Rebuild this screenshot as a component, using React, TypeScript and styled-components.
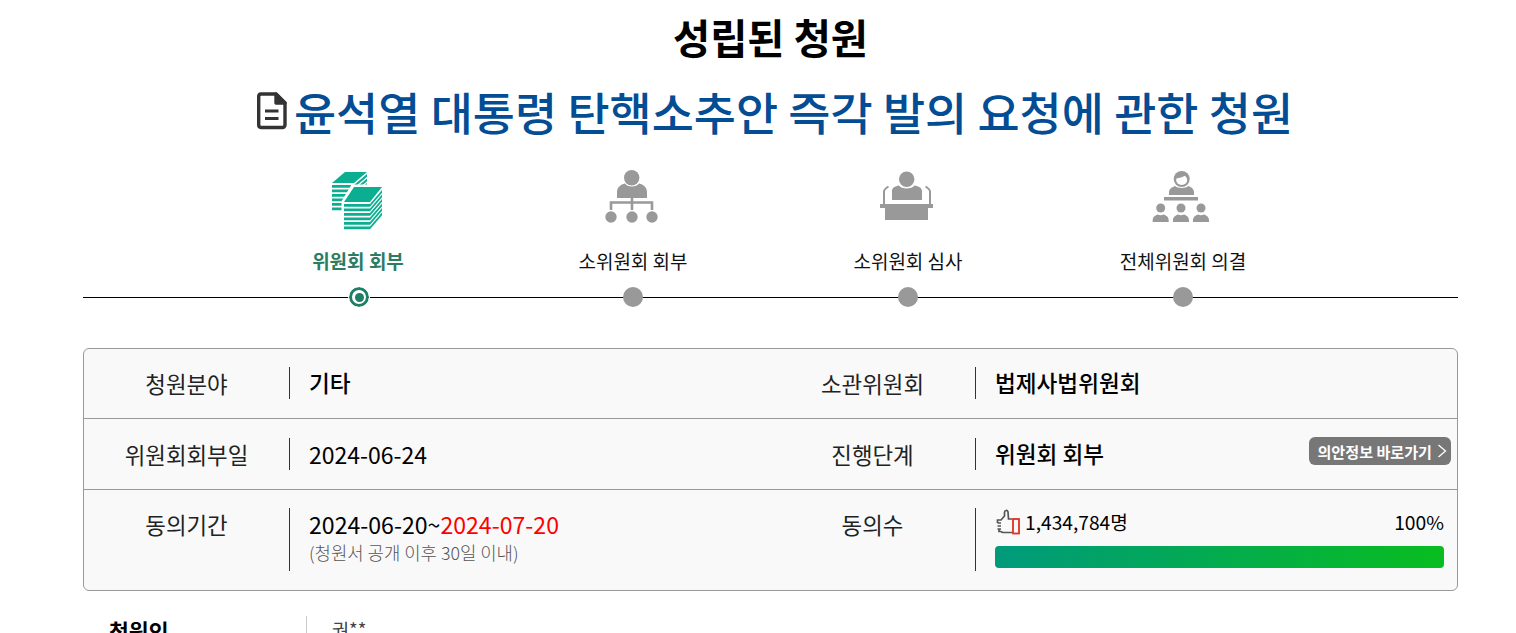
import React from "react";
import styled, { createGlobalStyle } from "styled-components";

const Global = createGlobalStyle`
  html, body { margin: 0; padding: 0; background: #fff; overflow: hidden; height: 633px; }
  body { font-family: "Noto Sans CJK KR", "Noto Sans", sans-serif; color: #000; }
`;
const Page = styled.div`width: 1375px; margin-left: 83px;`;
const Title = styled.h2`margin: 0; height: 74px; font-size: 40.4px; line-height: 74px; font-weight: 700; text-align: center; color: #000;`;
const Subject = styled.h1`
  margin: 0; height: 74px; padding-left: 9px; box-sizing: border-box; display: flex; justify-content: center; align-items: center; gap: 7px;
  font-size: 45.8px; line-height: 74px; font-weight: 500; color: #034d94;
`;
const Steps = styled.ol`
  position: relative; list-style: none; margin: 15px 0 0; padding: 0 137.5px; display: grid; grid-template-columns: repeat(4, 275px);
  &::before { content: ""; position: absolute; left: 0; right: 0; top: 134px; height: 1px; background: #000; }
`;
const Step = styled.li`display: flex; flex-direction: column; align-items: center; height: 147px;`;
const StepIcon = styled.div`width: 70px; height: 70px;`;
const StepLabel = styled.div<{ $active?: boolean }>`
  margin-top: 13px; height: 30px; font-size: 19px; line-height: 30px;
  font-weight: ${p => (p.$active ? 700 : 400)}; color: ${p => (p.$active ? "#2a7d62" : "#111")};
`;
const Dot = styled.span<{ $active?: boolean }>`
  position: relative; margin-top: 11px; width: 20px; height: 20px; border-radius: 50%; box-sizing: border-box;
  background: ${p => (p.$active ? "#fff" : "#999")};
  ${p => p.$active && `
    margin-left: 2px; border: 3px solid #1f7f63; outline: 1px solid #fff;
    &::after { content: ""; position: absolute; left: 2.5px; top: 2.5px; width: 9px; height: 9px; border-radius: 50%; background: #1f7f63; }
  `}
`;
const Card = styled.section`
  box-sizing: border-box; margin-top: 38px; height: 243px; border: 1px solid #999; border-radius: 6px; background: #f9f9f9;
  display: grid; grid-template-rows: 70px 71px 1fr;
`;
const Row = styled.div<{ $last?: boolean; $first?: boolean }>`
  display: grid; grid-template-columns: 686px 1fr; box-sizing: border-box;
  ${p => !p.$last && "border-bottom: 1px solid #999;"}
  ${p => p.$first && "padding-bottom: 1px;"}
`;
const Half = styled.div<{ $top?: boolean }>`
  display: grid; grid-template-columns: 205px 1fr;
  align-items: ${p => (p.$top ? "start" : "center")};
  padding-top: ${p => (p.$top ? "18px" : "0")};
`;
const Label = styled.div`text-align: center; font-size: 22.4px; line-height: 32px; color: #222;`;
const Value = styled.div<{ $digits?: boolean }>`
  box-sizing: border-box; border-left: 1px solid #333; padding: 0 6px 0 19px; min-height: 32px; line-height: 32px;
  font-size: ${p => (p.$digits ? "23px" : "22.6px")}; font-weight: ${p => (p.$digits ? 400 : 500)};
  display: flex; justify-content: space-between; align-items: center; color: #000;
`;
const DateValue = styled.div`box-sizing: border-box; border-left: 1px solid #333; padding-left: 19px; height: 63px;`;
const DateLine = styled.div`font-size: 23.1px; line-height: 33px; font-weight: 400; color: #000;`;
const Deadline = styled.span`color: #f00;`;
const Note = styled.div`font-size: 17.8px; line-height: 22px; color: #555; font-weight: 300;`;
const CountCell = styled.div`box-sizing: border-box; border-left: 1px solid #333; padding: 0 13px 0 19px; height: 63px;`;
const CountRow = styled.div`display: flex; justify-content: space-between; align-items: center; height: 28px; font-size: 19.2px; font-weight: 400;`;
const CountLeft = styled.div`display: flex; align-items: center; gap: 5px; padding-left: 1px;`;
const Percent = styled.span`font-weight: 400; font-size: 19.3px;`;
const Track = styled.div`margin-top: 10px; height: 22px; border-radius: 4px; background: linear-gradient(90deg, #009a7c, #08bd1f);`;
const LinkButton = styled.a`
  display: inline-flex; align-items: center; gap: 5px; height: 28px; margin: -3px 0 3px; padding: 0 4px 0 8px; border-radius: 6px; background: #777; color: #fff;
  font-size: 15.1px; line-height: 28px; font-weight: 700; white-space: nowrap;
`;
const Applicant = styled.div`display: grid; grid-template-columns: 223px 1fr; margin-top: 25px; height: 40px;`;
const ApplicantLabel = styled.div`padding-left: 26px; font-size: 21.6px; line-height: 26px; font-weight: 700; margin-top: 2px;`;
const ApplicantValue = styled.div`border-left: 1px solid #ccc; padding-left: 25px; font-size: 18.6px; line-height: 26px; color: #444;`;

const DocIcon = () => (
  <svg width="30" height="40" viewBox="0 0 30 40" fill="none" stroke="#333" strokeWidth="3.400">
    <path d="M4 3H19L28 12V34a2.500 2.500 0 0 1-2.500 2.500H4A2.500 2.500 0 0 1 1.700 34V5.500A2.500 2.500 0 0 1 4 3Z" strokeLinejoin="round" />
    <path d="M19 3V12H28Z" strokeLinejoin="round" fill="#333" />
    <path d="M8 20H21.500M8 27.500H21.500" strokeWidth="3" />
  </svg>
);

const StackIcon = () => (
  <svg width="70" height="70" viewBox="0 0 70 70">
    <g fill="#0bae90">
      <path d="M9 20L22 9H44L31 20Z" />
      {[0, 1, 2, 3, 4, 5].map(i => (
        <path key={i} d={`M9 ${22 + i * 4.5}H31L44 ${11 + i * 4.5}V${13.8 + i * 4.5}L31 ${24.8 + i * 4.5}H9Z`} />
      ))}
    </g>
    <path d="M21 39L30 24H59V50L47 65H21Z" fill="#fff" stroke="#fff" strokeWidth="5" />
    <g fill="#0bae90">
      <path d="M21 39L31 24H59L47 39Z" />
      {[0, 1, 2, 3, 4, 5].map(i => (
        <path key={i} d={`M21 ${41 + i * 4.5}H47L59 ${27 + i * 4.5}V${29.8 + i * 4.5}L47 ${43.8 + i * 4.5}H21Z`} />
      ))}
    </g>
  </svg>
);
const OrgIcon = () => (
  <svg width="70" height="70" viewBox="0 0 70 70" fill="#999">
    <circle cx="33.700" cy="14.700" r="7.700" />
    <path d="M19 35V29C19 24.500 22.500 21.500 27 20.500C29 24.500 38.500 24.500 41 20.500C45.500 21.500 49 24.500 49 29V35Z" />
    <path d="M34 35V47M13 47V39.500H54V47" fill="none" stroke="#999" strokeWidth="2.600" />
    <circle cx="13" cy="54" r="5.700" /><circle cx="34" cy="54" r="5.700" /><circle cx="54" cy="54" r="5.700" />
  </svg>
);
const PodiumIcon = () => (
  <svg width="70" height="70" viewBox="0 0 70 70" fill="#999">
    <circle cx="33.700" cy="16.300" r="7.700" />
    <path d="M19 37V28C19 25 22 23 26 22.500C28 26.500 39 26.500 41.500 22.500C45.500 23 49 25 49 28V37Z" />
    <rect x="7" y="41" width="53" height="4" />
    <rect x="12" y="45" width="43" height="12" />
    <path d="M11 41V28.500C11 26.500 13 25 15.500 23.500M57 41V28.500C57 26.500 55 25 52.500 23.500" fill="none" stroke="#999" strokeWidth="2" />
  </svg>
);
const Person = ({ x }: { x: number }) => (
  <g>
    <circle cx={x} cy="45" r="4.500" />
    <path d={`M${x - 8} 59V57C${x - 8} 54 ${x - 5} 52 ${x - 3} 51.500C${x - 1} 52.500 ${x + 1} 52.500 ${x + 3} 51.500C${x + 5} 52 ${x + 8} 54 ${x + 8} 57V59Z`} />
  </g>
);
const AudienceIcon = () => (
  <svg width="70" height="70" viewBox="0 0 70 70" fill="#999">
    <circle cx="33.700" cy="16" r="8" />
    <ellipse cx="33.700" cy="17" rx="5.500" ry="5" fill="#fff" />
    <path d="M28 15.500C32 15 36 14 37.500 12C39 13 39.500 14 39.500 16L39 12.500L34 10.500L29 12.500Z" />
    <path d="M21 32V29C21 26 24.500 24 27 23C29.500 25.500 38 25.500 40.500 23C43 24 46 26 46 29V32Z" />
    <rect x="16" y="34" width="34" height="3.500" />
    <Person x={12.700} /><Person x={33} /><Person x={53} />
  </svg>
);
const ThumbIcon = () => (
  <svg width="24" height="26" viewBox="0 0 24 26" fill="none">
    <path d="M16 23.500H6.500L5 22.500H3V19.500M16 10H12.500L12 3C11.500 0.800 8.500 1 8.500 3.500V7L5 11H1.500V14M1.500 14H5M1.500 17H5M1.500 20H5" stroke="#555" strokeWidth="1.700" />
    <rect x="17" y="10" width="6" height="14.500" stroke="#e2301f" strokeWidth="1.800" />
  </svg>
);

export default function App() {
  return (
    <Page>
      <Global />
      <Title>성립된 청원</Title>
      <Subject><DocIcon />윤석열 대통령 탄핵소추안 즉각 발의 요청에 관한 청원</Subject>
      <Steps>
        <Step><StepIcon><StackIcon /></StepIcon><StepLabel $active>위원회 회부</StepLabel><Dot $active /></Step>
        <Step><StepIcon><OrgIcon /></StepIcon><StepLabel>소위원회 회부</StepLabel><Dot /></Step>
        <Step><StepIcon><PodiumIcon /></StepIcon><StepLabel>소위원회 심사</StepLabel><Dot /></Step>
        <Step><StepIcon><AudienceIcon /></StepIcon><StepLabel>전체위원회 의결</StepLabel><Dot /></Step>
      </Steps>
      <Card>
        <Row $first>
          <Half><Label>청원분야</Label><Value>기타</Value></Half>
          <Half><Label>소관위원회</Label><Value>법제사법위원회</Value></Half>
        </Row>
        <Row>
          <Half><Label>위원회회부일</Label><Value $digits>2024-06-24</Value></Half>
          <Half><Label>진행단계</Label><Value>위원회 회부<LinkButton>의안정보 바로가기 <svg width="10" height="14" viewBox="0 0 10 14" fill="none" stroke="#fff" strokeWidth="1.300"><path d="M1.500 1L8.500 7L1.500 13" /></svg></LinkButton></Value></Half>
        </Row>
        <Row $last>
          <Half $top><Label>동의기간</Label><DateValue><DateLine>2024-06-20~<Deadline>2024-07-20</Deadline></DateLine><Note>(청원서 공개 이후 30일 이내)</Note></DateValue></Half>
          <Half $top><Label>동의수</Label><CountCell><CountRow><CountLeft><ThumbIcon />1,434,784명</CountLeft><Percent>100%</Percent></CountRow><Track /></CountCell></Half>
        </Row>
      </Card>
      <Applicant><ApplicantLabel>청원인</ApplicantLabel><ApplicantValue>권**</ApplicantValue></Applicant>
    </Page>
  );
}
